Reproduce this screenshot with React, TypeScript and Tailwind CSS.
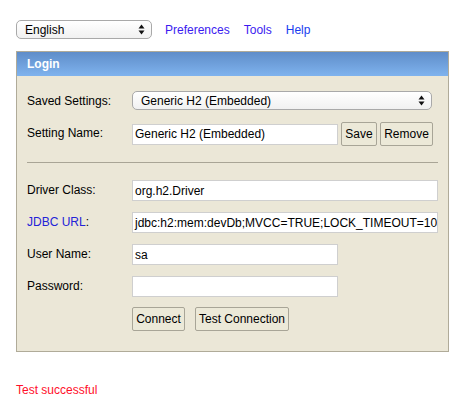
import React from 'react';

const font = { fontFamily: '"Liberation Sans", Arial, sans-serif' };

function Updown() {
  return (
    <svg width="7" height="11" viewBox="0 0 7 11" className="shrink-0">
      <path d="M3.5 0.5 L6.5 4.5 L0.5 4.5 Z" fill="#111" />
      <path d="M3.5 10.5 L6.5 6.5 L0.5 6.5 Z" fill="#111" />
    </svg>
  );
}

function FakeSelect({ value, className }: { value: string; className: string }) {
  return (
    <div
      className={`flex items-center justify-between h-[19px] rounded-[5px] border border-[#a9a9a9] bg-gradient-to-b from-[#ffffff] to-[#f1f1f1] pl-[8px] pr-[6px] text-[12px] text-black ${className}`}
    >
      <span>{value}</span>
      <Updown />
    </div>
  );
}

function TextBox({ value, className }: { value: string; className: string }) {
  return (
    <div
      className={`flex items-center h-[21px] border border-[#cfcfcf] bg-white px-[2px] text-[12px] text-black overflow-hidden whitespace-nowrap ${className}`}
    >
      {value}
    </div>
  );
}

function Btn({ children, className = '' }: { children: React.ReactNode; className?: string }) {
  return (
    <div
      className={`flex items-center justify-center h-[24px] rounded-[2px] border border-[#a8a597] bg-[#ece9d8] px-[3px] text-[12px] text-black whitespace-nowrap ${className}`}
    >
      {children}
    </div>
  );
}

function Row({ label, children, blue = false }: { label: string; children: React.ReactNode; blue?: boolean }) {
  return (
    <div className="flex items-start">
      <div className={`w-[105px] shrink-0 pt-[1px] text-[12px] ${blue ? 'text-[#2323d8]' : 'text-black'}`}>
        {blue ? (
          <>
            JDBC URL<span className="text-black">:</span>
          </>
        ) : (
          label
        )}
      </div>
      {children}
    </div>
  );
}

export default function App() {
  return (
    <div className="w-[467px] h-[412px] bg-white px-[16px] pt-[20px]" style={font}>
      <div className="flex items-center">
        <FakeSelect value="English" className="w-[136px]" />
        <div className="flex gap-[14px] ml-[13px] text-[12px]">
          <span className="text-[#3c1bf0]">Preferences</span>
          <span className="text-[#3c1bf0]">Tools</span>
          <span className="text-[#1a3df0]">Help</span>
        </div>
      </div>

      <div className="mt-[12px] w-[433px] border border-[#b0ab99] bg-[#ebe7d7]">
        <div className="h-[24px] flex items-center pl-[10px] bg-gradient-to-b from-[#5f8dc9] to-[#7fb3ee] text-[12px] font-bold text-white">
          Login
        </div>
        <div className="pl-[10px] pr-[10px] pt-[15px] pb-[20px]">
          <Row label="Saved Settings:">
            <FakeSelect value="Generic H2 (Embedded)" className="w-[300px]" />
          </Row>
          <div className="mt-[13px]">
            <Row label="Setting Name:">
              <div className="flex items-center -mt-[1px]">
                <TextBox value="Generic H2 (Embedded)" className="w-[206px]" />
                <Btn className="ml-[3px] w-[36px]">Save</Btn>
                <Btn className="ml-[3px] w-[53px]">Remove</Btn>
              </div>
            </Row>
          </div>
          <div className="mt-[16px] h-px bg-[#a9a596]" />
          <div className="mt-[17px] flex flex-col gap-[11px]">
            <Row label="Driver Class:">
              <TextBox value="org.h2.Driver" className="w-[306px]" />
            </Row>
            <Row label="JDBC URL" blue>
              <TextBox value="jdbc:h2:mem:devDb;MVCC=TRUE;LOCK_TIMEOUT=10000" className="w-[306px]" />
            </Row>
            <Row label="User Name:">
              <TextBox value="sa" className="w-[206px]" />
            </Row>
            <Row label="Password:">
              <TextBox value="" className="w-[206px]" />
            </Row>
          </div>
          <div className="mt-[10px] ml-[105px] flex gap-[10px]">
            <Btn className="w-[53px]">Connect</Btn>
            <Btn className="w-[94px]">Test Connection</Btn>
          </div>
        </div>
      </div>

      <div className="mt-[29px] text-[12px] text-[#ff0f2a]">Test successful</div>
    </div>
  );
}
